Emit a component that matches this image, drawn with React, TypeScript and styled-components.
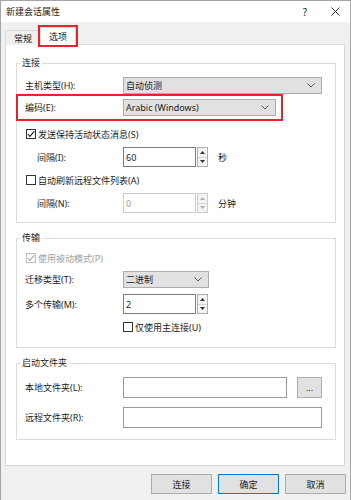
import styled, { createGlobalStyle } from "styled-components";

const GlobalStyle = createGlobalStyle`
  html, body {
    margin: 0;
    padding: 0;
  }
  body {
    font-family: "Noto Sans", "Noto Sans CJK SC", sans-serif;
    font-size: 9px;
    color: #1b1b1b;
    background: #f0f0f0;
  }
  * {
    box-sizing: border-box;
  }
`;

const Window = styled.div`
  width: 351px;
  height: 500px;
  display: flex;
  flex-direction: column;
  border: 1px solid #a6a6a6;
  border-bottom: none;
  background: #f0f0f0;
`;

const TitleBar = styled.div`
  height: 21px;
  display: flex;
  align-items: center;
  padding-left: 5px;
  background: #fff;
`;

const Title = styled.span`
  flex: 1;
`;

const TitleButton = styled.span`
  width: 30px;
  display: flex;
  justify-content: center;
  align-items: center;
  font-size: 10px;
`;

const Body = styled.div`
  flex: 1;
  display: flex;
  flex-direction: column;
  padding: 6px 5px 0 4px;
`;

const TabStrip = styled.div`
  height: 17px;
  display: flex;
  align-items: flex-end;
  margin-bottom: -1px;
`;

const Tab = styled.div<{ $active?: boolean }>`
  position: relative;
  z-index: 1;
  height: ${(p) => (p.$active ? 18 : 15)}px;
  display: flex;
  align-items: center;
  padding: 0 8px;
  margin-left: ${(p) => (p.$active ? -1 : 0)}px;
  border: 1px solid #d9d9d9;
  border-bottom: none;
  background: ${(p) => (p.$active ? "#fff" : "#f0f0f0")};
  outline: ${(p) => (p.$active ? "2px solid #e3262c" : "none")};
`;

const Panel = styled.div`
  flex: 1;
  padding: 11px 8px 0 10px;
  background: #fff;
  border: 1px solid #d9d9d9;
`;

// one framed section of the options page
const Group = styled.fieldset<{ $top: number; $bottom: number }>`
  display: block;
  margin: 0 0 8px;
  min-width: 0;
  border: 1px solid #dcdcdc;
  padding: ${(p) => p.$top}px 11px ${(p) => p.$bottom}px 8px;
`;

const Legend = styled.legend`
  padding: 0 2px;
  margin-left: -5px;
  line-height: 14px;
`;

const Stack = styled.div<{ $gap?: number }>`
  display: flex;
  flex-direction: column;
  gap: ${(p) => p.$gap ?? 6}px;
`;

const Row = styled.div`
  display: grid;
  grid-template-columns: 98px auto;
  align-items: center;
  justify-items: start;
`;

const Label = styled.span<{ $indent?: boolean }>`
  padding-left: ${(p) => (p.$indent ? 12 : 0)}px;
`;

const Highlight = styled.div`
  align-self: flex-start;
  margin: -6px 0 0 -9px;
  padding: 3px 5px 3px 7px;
  border: 2px solid #e3262c;
`;

const Select = styled.div<{ $width: number }>`
  width: ${(p) => p.$width}px;
  height: 17px;
  display: flex;
  align-items: center;
  justify-content: space-between;
  padding: 0 6px 0 2px;
  background: #e1e1e1;
  border: 1px solid #adadad;
`;

const CheckRow = styled.div<{ $disabled?: boolean; $inset?: number }>`
  height: 14px;
  display: flex;
  align-items: center;
  gap: 2px;
  margin-left: ${(p) => p.$inset ?? 1}px;
  color: ${(p) => (p.$disabled ? "#a0a0a0" : "inherit")};
`;

const Box = styled.span<{ $disabled?: boolean }>`
  width: 10px;
  height: 10px;
  display: flex;
  align-items: center;
  justify-content: center;
  background: #fff;
  border: 1px solid ${(p) => (p.$disabled ? "#bcbcbc" : "#333")};
`;

const Spinner = styled.div`
  display: flex;
  align-items: center;
`;

const SpinInput = styled.div<{ $disabled?: boolean }>`
  width: 73px;
  height: 20px;
  display: flex;
  align-items: center;
  padding-left: 2px;
  background: #fff;
  border: 1px solid ${(p) => (p.$disabled ? "#cccccc" : "#7a7a7a")};
  color: ${(p) => (p.$disabled ? "#a0a0a0" : "inherit")};
`;

const SpinButtons = styled.div<{ $disabled?: boolean }>`
  width: 11px;
  height: 20px;
  margin-left: 1px;
  display: flex;
  flex-direction: column;
  border: 1px solid ${(p) => (p.$disabled ? "#cccccc" : "#adadad")};
  background: #f4f4f4;
  color: ${(p) => (p.$disabled ? "#b0b0b0" : "#333")};
`;

const SpinHalf = styled.span`
  flex: 1;
  display: flex;
  align-items: center;
  justify-content: center;
  & + & {
    border-top: 1px solid #d6d6d6;
  }
`;

const Unit = styled.span`
  margin-left: 10px;
`;

const TextBox = styled.div<{ $width: number }>`
  width: ${(p) => p.$width}px;
  height: 21px;
  background: #fff;
  border: 1px solid #9a9a9a;
`;

const Browse = styled.div`
  width: 25px;
  height: 21px;
  margin-left: 10px;
  display: flex;
  align-items: center;
  justify-content: center;
  background: #e1e1e1;
  border: 1px solid #adadad;
`;

const Footer = styled.div`
  height: 34px;
  display: flex;
  justify-content: flex-end;
  gap: 6px;
  padding: 8px 4px 0 0;
`;

const Button = styled.div<{ $primary?: boolean }>`
  width: 61px;
  height: 20px;
  display: flex;
  align-items: center;
  justify-content: center;
  background: #e1e1e1;
  border: 1px solid ${(p) => (p.$primary ? "#0078d7" : "#adadad")};
`;

function Chevron() {
  return (
    <svg width="8" height="5" viewBox="0 0 8 5">
      <polyline points="0.5,0.5 4,4 7.5,0.5" fill="none" stroke="#555" strokeWidth="1" />
    </svg>
  );
}

function Tick({ color }: { color: string }) {
  return (
    <svg width="8" height="8" viewBox="0 0 8 8">
      <polyline points="0.8,4 3,6.4 7.3,1.2" fill="none" stroke={color} strokeWidth="1.1" />
    </svg>
  );
}

function Check({ text, checked, disabled, inset }: { text: string; checked?: boolean; disabled?: boolean; inset?: number }) {
  return (
    <CheckRow $disabled={disabled} $inset={inset}>
      <Box $disabled={disabled}>{checked && <Tick color={disabled ? "#a8a8a8" : "#222"} />}</Box>
      {text}
    </CheckRow>
  );
}

function Spin({ value, unit, disabled }: { value: string; unit?: string; disabled?: boolean }) {
  return (
    <Spinner>
      <SpinInput $disabled={disabled}>{value}</SpinInput>
      <SpinButtons $disabled={disabled}>
        <SpinHalf>
          <svg width="5" height="3" viewBox="0 0 5 3">
            <polygon points="2.5,0 5,3 0,3" fill="currentColor" />
          </svg>
        </SpinHalf>
        <SpinHalf>
          <svg width="5" height="3" viewBox="0 0 5 3">
            <polygon points="0,0 5,0 2.5,3" fill="currentColor" />
          </svg>
        </SpinHalf>
      </SpinButtons>
      {unit && <Unit>{unit}</Unit>}
    </Spinner>
  );
}

export default function App() {
  return (
    <>
      <GlobalStyle />
      <Window>
        <TitleBar>
          <Title>新建会话属性</Title>
          <TitleButton>?</TitleButton>
          <TitleButton>
            <svg width="9" height="9" viewBox="0 0 9 9">
              <path d="M0.5 0.5 L8.5 8.5 M8.5 0.5 L0.5 8.5" stroke="#333" strokeWidth="1" />
            </svg>
          </TitleButton>
        </TitleBar>
        <Body>
          <TabStrip>
            <Tab>常规</Tab>
            <Tab $active>选项</Tab>
          </TabStrip>
          <Panel>
            <Group $top={7} $bottom={9}>
              <Legend>连接</Legend>
              <Stack>
                <Row>
                  <Label>主机类型(H):</Label>
                  <Select $width={199}>
                    自动侦测
                    <Chevron />
                  </Select>
                </Row>
                <Highlight>
                  <Row>
                    <Label>编码(E):</Label>
                    <Select $width={153}>
                      Arabic (Windows)
                      <Chevron />
                    </Select>
                  </Row>
                </Highlight>
                <Check text="发送保持活动状态消息(S)" checked />
                <Row>
                  <Label $indent>间隔(I):</Label>
                  <Spin value="60" unit="秒" />
                </Row>
                <Check text="自动刷新远程文件列表(A)" />
                <Row>
                  <Label $indent>间隔(N):</Label>
                  <Spin value="0" unit="分钟" disabled />
                </Row>
              </Stack>
            </Group>
            <Group $top={6} $bottom={13}>
              <Legend>传输</Legend>
              <Stack>
                <Check text="使用被动模式(P)" checked disabled />
                <Row>
                  <Label>迁移类型(T):</Label>
                  <Select $width={86}>
                    二进制
                    <Chevron />
                  </Select>
                </Row>
                <Row>
                  <Label>多个传输(M):</Label>
                  <Spin value="2" />
                </Row>
                <Check text="仅使用主连接(U)" inset={98} />
              </Stack>
            </Group>
            <Group $top={7} $bottom={11}>
              <Legend>启动文件夹</Legend>
              <Stack $gap={9}>
                <Row>
                  <Label>本地文件夹(L):</Label>
                  <Spinner>
                    <TextBox $width={164} />
                    <Browse>...</Browse>
                  </Spinner>
                </Row>
                <Row>
                  <Label>远程文件夹(R):</Label>
                  <TextBox $width={199} />
                </Row>
              </Stack>
            </Group>
          </Panel>
        </Body>
        <Footer>
          <Button>连接</Button>
          <Button $primary>确定</Button>
          <Button>取消</Button>
        </Footer>
      </Window>
    </>
  );
}
